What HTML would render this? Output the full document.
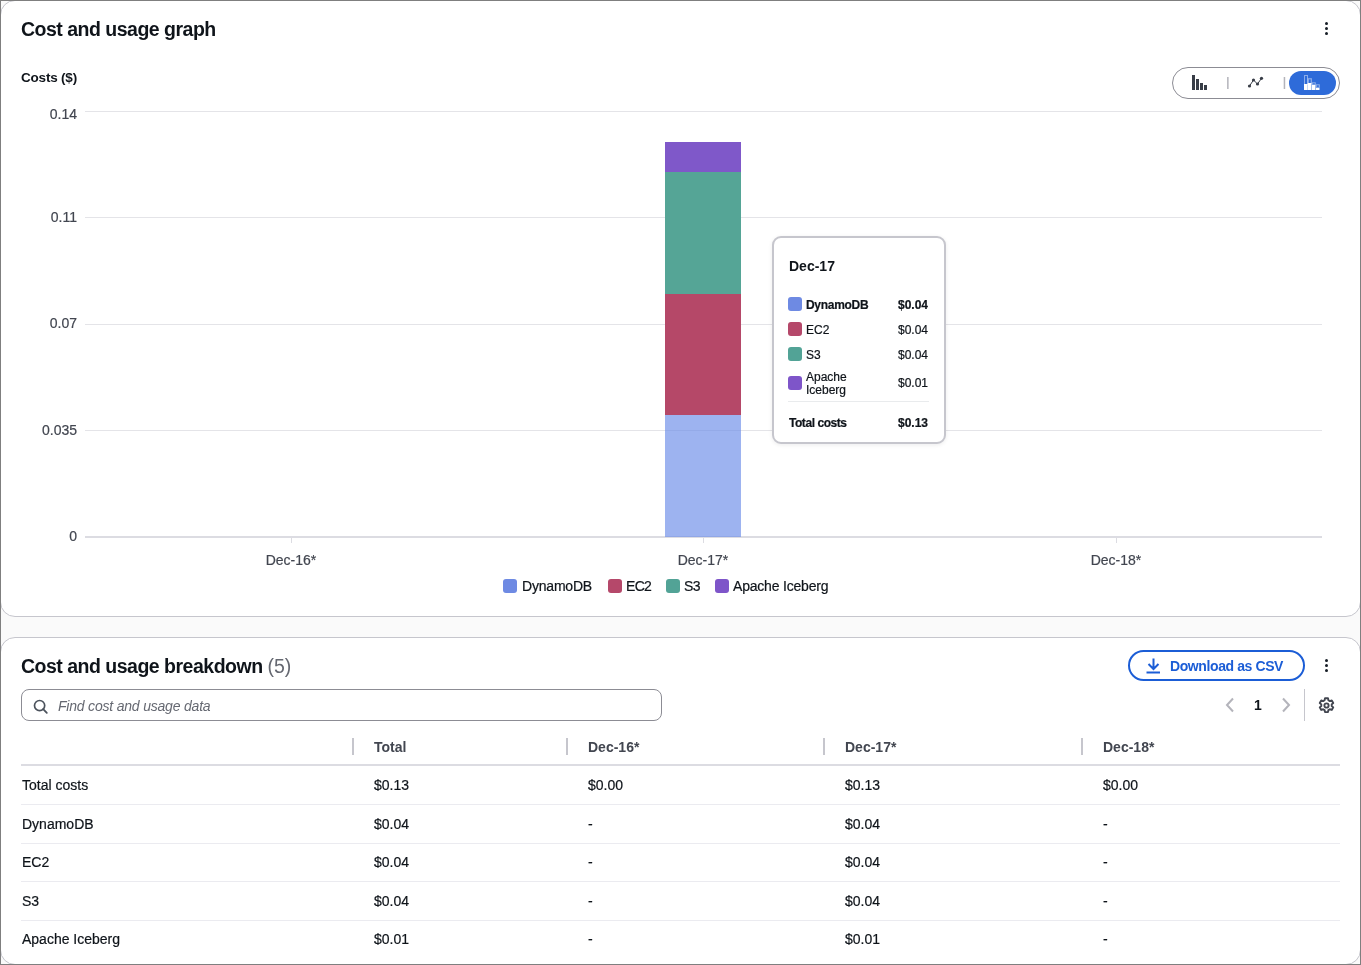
<!DOCTYPE html>
<html><head><meta charset="utf-8">
<style>
*{margin:0;padding:0;box-sizing:border-box}
html,body{width:1361px;height:965px;overflow:hidden;background:#fff}
body{font-family:"Liberation Sans",sans-serif;color:#0f141a;position:relative}
#root{position:absolute;left:0;top:0;width:1361px;height:965px;will-change:transform;background:#fff}
.td,.ax,.tt,.leg{-webkit-text-stroke:0.2px currentColor}
#bg{position:absolute;left:0;top:0;width:1361px;height:965px;background:#fafafa}
#frame{position:absolute;left:0;top:0;width:1361px;height:965px;border:1px solid #7f7f7f;z-index:10}
.card{position:absolute;left:0;width:1361px;background:#fff;border:1px solid #c6c6cd;border-radius:15px}
.t{position:absolute;white-space:nowrap;line-height:1}
.h2{font-weight:bold;font-size:19.5px;letter-spacing:-0.5px;color:#0f141a}
.ax{font-size:14px;color:#424650}
.axr{text-align:right;width:60px}
.xl{text-align:center;width:100px}
.grid{position:absolute;left:85px;width:1237px;height:1px;background:#e4e4e8}
.tick{position:absolute;width:1px;height:5px;top:538px;background:#dcdce2}
.dots{position:absolute;width:3px;height:13px}
.dots i{position:absolute;left:0;width:3.1px;height:3.1px;border-radius:50%;background:#161d26}
.seg{position:absolute;left:665px;width:76px}
.sq{position:absolute;width:14px;height:14px;border-radius:3px}
.tt{font-size:12px;color:#0f141a}
.b{font-weight:bold}
.vline{position:absolute;width:2px;background:#c6c6cd}
.hline{position:absolute;left:21px;width:1319px;height:1px;background:#ebebf0}
.td{font-size:14px;color:#0f141a}
.th{font-size:14px;font-weight:bold;color:#424650}
</style></head>
<body>
<div id="root">
<div id="bg"></div>
<div class="card" style="top:0;height:617px"></div>
<div class="card" style="top:637px;height:328px"></div>
<div id="frame"></div>

<!-- ============ Card 1 ============ -->
<div class="t h2" style="left:21px;top:20px">Cost and usage graph</div>
<div class="dots" style="left:1325px;top:21.6px"><i style="top:0"></i><i style="top:5.4px"></i><i style="top:10.8px"></i></div>

<div class="t b" style="left:21px;top:71px;font-size:13.5px;letter-spacing:-0.2px;color:#0f141a">Costs ($)</div>

<!-- toggle -->
<div style="position:absolute;left:1172px;top:67px;width:168px;height:32px;border:1px solid #8c8c94;border-radius:16px;background:#fff"></div>
<svg style="position:absolute;left:1226px;top:77px" width="4" height="12"><rect x="1.1" y="0" width="1.5" height="12" fill="#b4b4bb"/></svg>
<svg style="position:absolute;left:1283px;top:77px" width="4" height="12"><rect x="0.7" y="0" width="1.5" height="12" fill="#b4b4bb"/></svg>
<div style="position:absolute;left:1289px;top:71px;width:47px;height:24px;border-radius:12px;background:#2e6bd9"></div>
<svg style="position:absolute;left:1190px;top:74px" width="18" height="17" viewBox="0 0 18 17">
  <rect x="2" y="1" width="3" height="15" fill="#383d47"/>
  <rect x="6" y="5" width="3" height="11" fill="#383d47"/>
  <rect x="10" y="9" width="3" height="7" fill="#383d47"/>
  <rect x="14" y="11" width="3" height="5" fill="#383d47"/>
</svg>
<svg style="position:absolute;left:1247px;top:76px" width="17" height="13" viewBox="0 0 17 13">
  <polyline points="2.5,10 6.5,4 10.5,8 14.5,2.3" fill="none" stroke="#383d47" stroke-width="1"/>
  <circle cx="2.5" cy="10" r="1.6" fill="#383d47"/><circle cx="6.5" cy="4" r="1.6" fill="#383d47"/>
  <circle cx="10.5" cy="8" r="1.6" fill="#383d47"/><circle cx="14.5" cy="2.3" r="1.6" fill="#383d47"/>
</svg>
<svg style="position:absolute;left:1304px;top:75px" width="16" height="15" viewBox="0 0 16 15">
  <rect x="0.5" y="0.5" width="3" height="9" fill="none" stroke="#fff" stroke-opacity="0.45" stroke-width="1"/>
  <rect x="0" y="9" width="3.6" height="6" fill="#fff"/>
  <rect x="4.3" y="3.8" width="3" height="5" fill="none" stroke="#fff" stroke-opacity="0.45" stroke-width="1.2"/>
  <rect x="3.8" y="8" width="3.6" height="7" fill="#fff"/>
  <rect x="8.3" y="7.8" width="3" height="2" fill="none" stroke="#fff" stroke-opacity="0.45" stroke-width="1"/>
  <rect x="7.9" y="10" width="3.6" height="5" fill="#fff"/>
  <rect x="12.3" y="9.8" width="3" height="2.6" fill="none" stroke="#fff" stroke-opacity="0.45" stroke-width="1"/>
  <rect x="11.9" y="13" width="3.6" height="2" fill="#fff"/>
  <rect x="3.6" y="9" width="0.4" height="6" fill="#fff" fill-opacity="0.5"/>
  <rect x="7.5" y="10" width="0.4" height="5" fill="#fff" fill-opacity="0.5"/>
</svg>

<!-- gridlines -->
<div class="grid" style="top:111px"></div>
<div class="grid" style="top:217px"></div>
<div class="grid" style="top:324px"></div>
<div class="grid" style="top:430px"></div>
<div class="grid" style="top:536px;height:2px;background:#dcdce2"></div>

<div class="t ax axr" style="left:17px;top:107px">0.14</div>
<div class="t ax axr" style="left:17px;top:210px">0.11</div>
<div class="t ax axr" style="left:17px;top:316px">0.07</div>
<div class="t ax axr" style="left:17px;top:423px">0.035</div>
<div class="t ax axr" style="left:17px;top:529px">0</div>

<!-- bar -->
<div class="seg" style="top:142px;height:30px;background:#7f58c9"></div>
<div class="seg" style="top:172px;height:122px;background:#55a596"></div>
<div class="seg" style="top:294px;height:121px;background:#b54868"></div>
<div class="seg" style="top:415px;height:122px;background:rgba(104,138,232,0.65)"></div>

<div class="tick" style="left:291px"></div>
<div class="tick" style="left:703px"></div>
<div class="tick" style="left:1116px"></div>
<div class="t ax xl" style="left:241px;top:553px">Dec-16*</div>
<div class="t ax xl" style="left:653px;top:553px">Dec-17*</div>
<div class="t ax xl" style="left:1066px;top:553px">Dec-18*</div>

<!-- legend -->
<div class="sq" style="left:503px;top:579px;background:#6e8ae3"></div>
<div class="t leg" style="left:522px;top:579px;font-size:14px;letter-spacing:-0.2px">DynamoDB</div>
<div class="sq" style="left:608px;top:579px;background:#b5486a"></div>
<div class="t leg" style="left:626px;top:579px;font-size:14px;letter-spacing:-0.7px">EC2</div>
<div class="sq" style="left:666px;top:579px;background:#52a396"></div>
<div class="t leg" style="left:684px;top:579px;font-size:14px;letter-spacing:-0.5px">S3</div>
<div class="sq" style="left:715px;top:579px;background:#7e55c9"></div>
<div class="t leg" style="left:733px;top:579px;font-size:14px;letter-spacing:-0.2px">Apache Iceberg</div>

<!-- tooltip -->
<div style="position:absolute;left:772px;top:236px;width:174px;height:208px;border:2px solid #c6c6cd;border-radius:9px;background:#fff;box-shadow:0 1px 4px rgba(0,7,22,0.08)"></div>
<div class="t b" style="left:789px;top:259px;font-size:14px">Dec-17</div>
<div class="sq" style="left:788px;top:297px;background:#6e8ae3"></div>
<div class="t tt b" style="left:806px;top:299px;letter-spacing:-0.3px">DynamoDB</div>
<div class="t tt b" style="left:898px;top:299px">$0.04</div>
<div class="sq" style="left:788px;top:322px;background:#b5486a"></div>
<div class="t tt" style="left:806px;top:324px">EC2</div>
<div class="t tt" style="left:898px;top:324px">$0.04</div>
<div class="sq" style="left:788px;top:347px;background:#52a396"></div>
<div class="t tt" style="left:806px;top:349px">S3</div>
<div class="t tt" style="left:898px;top:349px">$0.04</div>
<div class="sq" style="left:788px;top:376px;background:#7e55c9"></div>
<div class="t tt" style="left:806px;top:371px">Apache</div>
<div class="t tt" style="left:806px;top:384px">Iceberg</div>
<div class="t tt" style="left:898px;top:377px">$0.01</div>
<div style="position:absolute;left:788px;top:401px;width:141px;height:1px;background:#e9ebed"></div>
<div class="t tt b" style="left:789px;top:417px;letter-spacing:-0.45px">Total costs</div>
<div class="t tt b" style="left:898px;top:417px">$0.13</div>

<!-- ============ Card 2 ============ -->
<div class="t h2" style="left:21px;top:657px">Cost and usage breakdown <span style="font-weight:normal;color:#656871;letter-spacing:0">(5)</span></div>

<div style="position:absolute;left:1128px;top:650px;width:177px;height:31px;border:2px solid #1b5dd6;border-radius:16px;background:#fff"></div>
<svg style="position:absolute;left:1145px;top:657px" width="17" height="17" viewBox="0 0 17 17">
  <path d="M8.5 1.5 V11.5 M3.5 7 L8.5 12 L13.5 7" fill="none" stroke="#1b5dd6" stroke-width="2"/>
  <path d="M1.5 15.5 H15" stroke="#1b5dd6" stroke-width="2"/>
</svg>
<div class="t b" style="left:1170px;top:659px;font-size:14px;color:#1b5dd6;letter-spacing:-0.4px">Download as CSV</div>
<div class="dots" style="left:1325px;top:658.5px"><i style="top:0"></i><i style="top:5.2px"></i><i style="top:10.4px"></i></div>

<!-- search -->
<div style="position:absolute;left:21px;top:689px;width:641px;height:32px;border:1px solid #8c8c94;border-radius:8px;background:#fff"></div>
<svg style="position:absolute;left:32px;top:698px" width="17" height="17" viewBox="0 0 17 17">
  <circle cx="7.6" cy="7.6" r="5.1" fill="none" stroke="#4b525c" stroke-width="1.7"/>
  <path d="M11.2 11.2 L14.8 14.8" stroke="#4b525c" stroke-width="1.8" stroke-linecap="round"/>
</svg>
<div class="t" style="left:58px;top:699px;font-size:14px;font-style:italic;color:#656871;letter-spacing:-0.2px">Find cost and usage data</div>

<!-- pagination -->
<svg style="position:absolute;left:1224px;top:697px" width="12" height="16" viewBox="0 0 12 16">
  <path d="M9 1.5 L3 8 L9 14.5" fill="none" stroke="#b4b4bb" stroke-width="2"/>
</svg>
<div class="t b" style="left:1254px;top:698px;font-size:14px">1</div>
<svg style="position:absolute;left:1280px;top:697px" width="12" height="16" viewBox="0 0 12 16">
  <path d="M3 1.5 L9 8 L3 14.5" fill="none" stroke="#b4b4bb" stroke-width="2"/>
</svg>
<div style="position:absolute;left:1304px;top:689px;width:1px;height:32px;background:#c6c6cd"></div>
<svg style="position:absolute;left:1318px;top:697px" width="17" height="17" viewBox="0 0 16 16">
  <path d="M6.6 1.2 h2.8 l0.4 1.9 1.3 0.75 1.85 -0.6 1.4 2.4 -1.45 1.3 v1.5 l1.45 1.3 -1.4 2.4 -1.85 -0.6 -1.3 0.75 -0.4 1.9 h-2.8 l-0.4 -1.9 -1.3 -0.75 -1.85 0.6 -1.4 -2.4 1.45 -1.3 v-1.5 l-1.45 -1.3 1.4 -2.4 1.85 0.6 1.3 -0.75 z" fill="none" stroke="#424650" stroke-width="1.8" stroke-linejoin="round"/>
  <circle cx="8" cy="8" r="2" fill="none" stroke="#424650" stroke-width="1.8"/>
</svg>

<!-- table header -->
<div class="vline" style="left:352px;top:738px;height:17px"></div>
<div class="vline" style="left:566px;top:738px;height:17px"></div>
<div class="vline" style="left:823px;top:738px;height:17px"></div>
<div class="vline" style="left:1081px;top:738px;height:17px"></div>
<div class="t th" style="left:374px;top:740px">Total</div>
<div class="t th" style="left:588px;top:740px">Dec-16*</div>
<div class="t th" style="left:845px;top:740px">Dec-17*</div>
<div class="t th" style="left:1103px;top:740px">Dec-18*</div>
<div class="hline" style="top:764px;height:2px;background:#dcdce2"></div>

<!-- rows -->
<div class="t td" style="left:22px;top:778px">Total costs</div>
<div class="t td" style="left:374px;top:778px">$0.13</div>
<div class="t td" style="left:588px;top:778px">$0.00</div>
<div class="t td" style="left:845px;top:778px">$0.13</div>
<div class="t td" style="left:1103px;top:778px">$0.00</div>
<div class="hline" style="top:804px"></div>

<div class="t td" style="left:22px;top:817px">DynamoDB</div>
<div class="t td" style="left:374px;top:817px">$0.04</div>
<div class="t td" style="left:588px;top:817px">-</div>
<div class="t td" style="left:845px;top:817px">$0.04</div>
<div class="t td" style="left:1103px;top:817px">-</div>
<div class="hline" style="top:843px"></div>

<div class="t td" style="left:22px;top:855px">EC2</div>
<div class="t td" style="left:374px;top:855px">$0.04</div>
<div class="t td" style="left:588px;top:855px">-</div>
<div class="t td" style="left:845px;top:855px">$0.04</div>
<div class="t td" style="left:1103px;top:855px">-</div>
<div class="hline" style="top:881px"></div>

<div class="t td" style="left:22px;top:894px">S3</div>
<div class="t td" style="left:374px;top:894px">$0.04</div>
<div class="t td" style="left:588px;top:894px">-</div>
<div class="t td" style="left:845px;top:894px">$0.04</div>
<div class="t td" style="left:1103px;top:894px">-</div>
<div class="hline" style="top:920px"></div>

<div class="t td" style="left:22px;top:932px">Apache Iceberg</div>
<div class="t td" style="left:374px;top:932px">$0.01</div>
<div class="t td" style="left:588px;top:932px">-</div>
<div class="t td" style="left:845px;top:932px">$0.01</div>
<div class="t td" style="left:1103px;top:932px">-</div>

</div>
</body></html>
